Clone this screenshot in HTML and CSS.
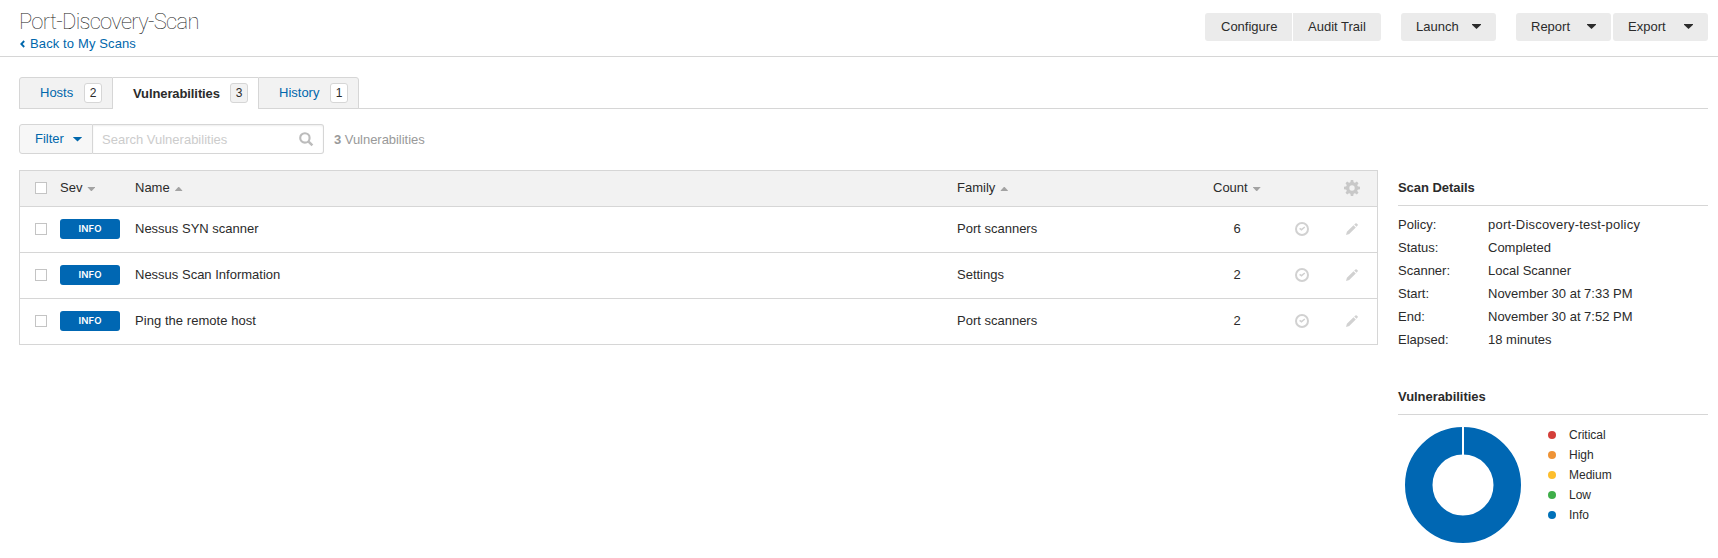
FILE: index.html
```html
<!DOCTYPE html>
<html lang="en">
<head>
<meta charset="utf-8">
<title>Port-Discovery-Scan</title>
<link rel="stylesheet" href="styles.css">
</head>
<body>
<svg class="defs" width="0" height="0">
  <symbol id="clock" viewBox="0 0 14 14"><circle cx="7" cy="7" r="6" fill="none" stroke="currentColor" stroke-width="2"/><path d="M4.6 6.3L6.5 7.7L9.8 5" fill="none" stroke="currentColor" stroke-width="1.5"/></symbol>
  <symbol id="pencil" viewBox="0 0 12 12"><path d="M0 12L.9 8.8L7.5 2.2L9.8 4.5L3.2 11.1ZM8.2 1.5L9.4 .4Q10.1 -.1 10.7 .4L11.6 1.3Q12.1 1.9 11.6 2.6L10.5 3.8Z" fill="currentColor"/></symbol>
</svg>
<header class="header">
  <div>
    <h1 class="title">Port-Discovery-Scan</h1>
    <a class="back"><svg width="5" height="8" viewBox="0 0 5 8"><path d="M4.2 1L1.3 4L4.2 7" fill="none" stroke="currentColor" stroke-width="1.8"/></svg>Back to My Scans</a>
  </div>
  <div class="actions">
    <div class="pair"><span class="button first">Configure</span><span class="button last">Audit Trail</span></div>
    <span class="button menu">Launch<i class="caret"></i></span>
    <div class="exports"><span class="button menu">Report<i class="caret"></i></span><span class="button menu">Export<i class="caret"></i></span></div>
  </div>
</header>
<nav class="tabs">
  <a class="tab hosts">Hosts<b class="num">2</b></a>
  <a class="tab active">Vulnerabilities<b class="num">3</b></a>
  <a class="tab history">History<b class="num">1</b></a>
</nav>
<div class="toolbar">
  <span class="filter">Filter<i class="caret"></i></span>
  <div class="search"><span>Search Vulnerabilities</span><svg width="15" height="15" viewBox="0 0 15 15"><circle cx="5.9" cy="5.9" r="4.7" fill="none" stroke="currentColor" stroke-width="2.1"/><path d="M9.3 9.3L13.4 13.4" stroke="currentColor" stroke-width="2.5"/></svg></div>
  <span class="total"><strong>3</strong> Vulnerabilities</span>
</div>
<main class="content">
  <section class="table">
    <div class="row head">
      <i class="check"></i><span>Sev<i class="sort down"></i></span><span>Name<i class="sort"></i></span><span>Family<i class="sort"></i></span><span class="counthead">Count<i class="sort down"></i></span><span></span>
      <svg class="gear" width="16" height="16" viewBox="0 0 16 16"><g fill="currentColor"><path fill-rule="evenodd" d="M8 2A6 6 0 1 0 8 14A6 6 0 1 0 8 2ZM8 5.3A2.7 2.7 0 1 1 8 10.7A2.7 2.7 0 1 1 8 5.3Z"/><path id="tooth" d="M6.3 3L6.8 0H9.2L9.7 3Z"/><use href="#tooth" transform="rotate(45 8 8)"/><use href="#tooth" transform="rotate(90 8 8)"/><use href="#tooth" transform="rotate(135 8 8)"/><use href="#tooth" transform="rotate(180 8 8)"/><use href="#tooth" transform="rotate(225 8 8)"/><use href="#tooth" transform="rotate(270 8 8)"/><use href="#tooth" transform="rotate(315 8 8)"/></g></svg>
    </div>
    <div class="row"><i class="check"></i><b class="sev">INFO</b><span>Nessus SYN scanner</span><span>Port scanners</span><span class="count">6</span><svg class="icon" width="14" height="14"><use href="#clock"/></svg><svg class="icon edit" width="12" height="12"><use href="#pencil"/></svg></div>
    <div class="row"><i class="check"></i><b class="sev">INFO</b><span>Nessus Scan Information</span><span>Settings</span><span class="count">2</span><svg class="icon" width="14" height="14"><use href="#clock"/></svg><svg class="icon edit" width="12" height="12"><use href="#pencil"/></svg></div>
    <div class="row"><i class="check"></i><b class="sev">INFO</b><span class="ping">Ping the remote host</span><span>Port scanners</span><span class="count">2</span><svg class="icon" width="14" height="14"><use href="#clock"/></svg><svg class="icon edit" width="12" height="12"><use href="#pencil"/></svg></div>
  </section>
  <aside class="side">
    <h2 class="heading">Scan Details</h2>
    <dl class="details">
      <dt>Policy:</dt><dd class="policy">port-Discovery-test-policy</dd>
      <dt>Status:</dt><dd>Completed</dd>
      <dt>Scanner:</dt><dd>Local Scanner</dd>
      <dt>Start:</dt><dd>November 30 at 7:33 PM</dd>
      <dt>End:</dt><dd>November 30 at 7:52 PM</dd>
      <dt>Elapsed:</dt><dd>18 minutes</dd>
    </dl>
    <h2 class="heading">Vulnerabilities</h2>
    <div class="chart">
      <svg width="116" height="116" viewBox="0 0 116 116"><circle cx="58" cy="58" r="44.25" fill="none" stroke="#0067b3" stroke-width="27.5"/><path d="M58 0V30" stroke="#fff" stroke-width="2"/></svg>
      <ul class="legend"><li class="critical">Critical</li><li class="high">High</li><li class="medium">Medium</li><li class="low">Low</li><li class="info">Info</li></ul>
    </div>
  </aside>
</main>
</body>
</html>
```
FILE: styles.css
```css
* { box-sizing: border-box; }
body { margin: 0; background: #fff; color: #2b2b2b; font: 13px/16px "Liberation Sans", Arial, sans-serif; }
.defs { display: block; }
.header { height: 57px; border-bottom: 1px solid #d6d6d6; padding: 0 10px 0 19px; display: flex; justify-content: space-between; }
.title { margin: 9px 0 0; font: 100 22px/26px Roboto, "Liberation Sans", sans-serif; letter-spacing: -.72px; color: #222; }
.back { display: flex; align-items: center; gap: 5px; margin: 1px 0 0 1px; color: #0067ac; letter-spacing: .12px; }
.actions { display: flex; gap: 20px; padding-top: 13px; }
.pair { display: flex; gap: 1px; }
.exports { display: flex; gap: 2px; }
.button { height: 28px; line-height: 27px; background: #ebebeb; border-radius: 3px; }
.first { width: 87px; padding-left: 16px; border-radius: 3px 0 0 3px; }
.last { width: 88px; padding-left: 15px; border-radius: 0 3px 3px 0; }
.menu { width: 95px; padding: 0 15px 1px 15px; display: flex; justify-content: space-between; align-items: center; }
.caret { width: 9px; height: 5px; background: currentColor; clip-path: polygon(0 0, 100% 0, 100% 15%, 50% 100%, 0 15%); }
.tabs { display: flex; margin: 20px 10px 0 19px; height: 32px; border-bottom: 1px solid #d6d6d6; }
.tab { height: 32px; display: flex; align-items: center; background: #f2f2f2; border: 1px solid #d6d6d6; color: #0067ac; padding: 0 10px 0 20px; justify-content: space-between; }
.hosts { width: 94px; border-radius: 3px 0 0 0; }
.active { width: 145px; background: #fff; border-width: 1px 0 0; color: #2b2b2b; font-weight: bold; letter-spacing: -.1px; }
.history { width: 101px; border-radius: 0 3px 0 0; }
.num { width: 18px; height: 20px; border: 1px solid #d6d6d6; border-radius: 3px; background: #fff; color: #2b2b2b; font: 12px/18px "Liberation Sans", Arial, sans-serif; text-align: center; }
.active .num { background: #f2f2f2; margin-bottom: 1px; }
.toolbar { display: flex; margin: 15px 0 0 19px; height: 30px; line-height: 30px; }
.filter { width: 74px; border: 1px solid #d6d6d6; border-radius: 3px 0 0 3px; background: #f7f7f7; color: #0067ac; line-height: 28px; padding: 0 10px 0 15px; display: flex; align-items: center; justify-content: space-between; }
.search { width: 231px; border: 1px solid #d6d6d6; border-left: 0; border-radius: 0 3px 3px 0; box-shadow: inset 0 1px 2px #eee; color: #ccc; padding: 0 9px 0 9px; display: flex; align-items: center; justify-content: space-between; }
.search span { padding-top: 1px; }
.search svg { color: #bcbcbc; }
.total { margin-left: 10px; padding-top: 1px; color: #999; letter-spacing: -.04px; }
.content { display: flex; margin: 16px 10px 0 19px; gap: 20px; align-items: flex-start; }
.table { width: 1359px; border: 1px solid #d6d6d6; border-bottom: 0; }
.row { display: grid; grid-template-columns: 40px 75px 822px 256px 82px 38px 1fr; height: 46px; padding-bottom: 1px; border-bottom: 1px solid #d6d6d6; align-items: center; }
.head { height: 36px; background: #f2f2f2; padding-bottom: 1px; }
.check { width: 12px; height: 12px; margin-left: 15px; border: 1px solid #c4c4c4; background: #fff; }
.sort { display: inline-block; width: 8px; height: 4px; margin: 0 0 1px 5px; background: #a3a3a3; clip-path: polygon(45% 0, 55% 0, 95% 85%, 95% 100%, 5% 100%, 5% 85%); }
.down { clip-path: polygon(5% 0, 95% 0, 95% 15%, 55% 100%, 45% 100%, 5% 15%); }
.sev { width: 60px; height: 20px; border-radius: 3px; background: #0067b3; color: #fff; font: 600 9.5px/20px Inter, "Liberation Sans", sans-serif; letter-spacing: .1px; text-align: center; }
.ping { letter-spacing: .05px; }
.count { text-align: center; padding-right: 34px; }
.icon { color: #d1d1d1; }
.gear { color: #c8c8c8; margin-left: 11px; }
.edit { margin-left: 13px; }
.side { flex: 1; }
.heading { margin: 0; height: 36px; border-bottom: 1px solid #d6d6d6; padding-top: 10px; font-size: 13px; line-height: 16px; font-weight: bold; letter-spacing: -.05px; }
.details { display: grid; grid-template-columns: 90px 1fr; grid-auto-rows: 23px; line-height: 23px; margin: 7px 0 28px; }
.details dd { margin: 0; }
.details .policy { letter-spacing: .21px; }
.chart { display: flex; padding: 12px 0 0 7px; }
.legend { list-style: none; margin: -2px 0 0 27px; padding: 0; font-size: 12px; line-height: 20px; }
.legend li { display: flex; align-items: center; height: 20px; }
.legend li::before { content: ""; width: 8px; height: 8px; border-radius: 50%; margin-right: 13px; background: currentColor; }
.critical::before { color: #d43f3a; }
.high::before { color: #ee9336; }
.medium::before { color: #fdbe2d; }
.low::before { color: #3fae49; }
.info::before { color: #0071b9; }
```
